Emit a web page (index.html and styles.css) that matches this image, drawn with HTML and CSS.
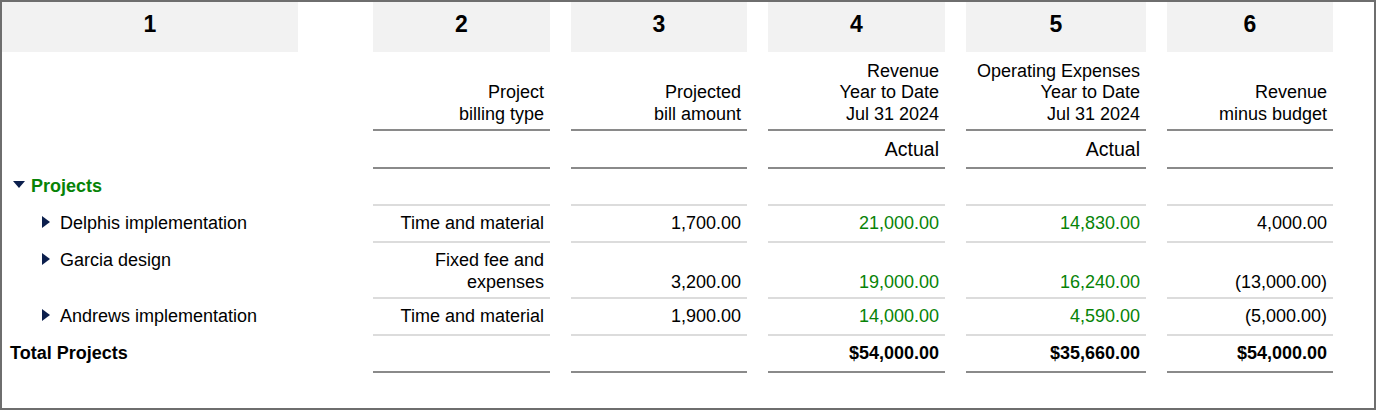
FILE: index.html
```html
<!DOCTYPE html>
<html lang="en">
<head>
<meta charset="utf-8">
<title>Projects report</title>
<link rel="stylesheet" href="styles.css">
</head>
<body>
<div class="frame">
  <div class="report">
    <!-- column numbers -->
    <div class="hnum first">1</div>
    <div class="hnum">2</div>
    <div class="hnum">3</div>
    <div class="hnum">4</div>
    <div class="hnum">5</div>
    <div class="hnum">6</div>

    <!-- column titles -->
    <div class="name"></div>
    <div class="htxt"><span>Project</span><span>billing type</span></div>
    <div class="htxt"><span>Projected</span><span>bill amount</span></div>
    <div class="htxt"><span>Revenue</span><span>Year to Date</span><span>Jul 31 2024</span></div>
    <div class="htxt"><span>Operating Expenses</span><span>Year to Date</span><span>Jul 31 2024</span></div>
    <div class="htxt"><span>Revenue</span><span>minus budget</span></div>

    <!-- scenario row -->
    <div class="name"></div>
    <div class="act"></div>
    <div class="act"></div>
    <div class="act">Actual</div>
    <div class="act">Actual</div>
    <div class="act"></div>

    <!-- group -->
    <div class="name group">
      <svg class="tri-down" width="12" height="7" viewBox="0 0 12 7"><path d="M0 0H12L6 7Z"/></svg>
      <span>Projects</span>
    </div>
    <div class="val light"></div>
    <div class="val light"></div>
    <div class="val light"></div>
    <div class="val light"></div>
    <div class="val light"></div>

    <!-- Delphis -->
    <div class="name child">
      <svg class="tri-right" width="8" height="12" viewBox="0 0 8 12"><path d="M0 0L8 6L0 12Z"/></svg>
      <span>Delphis implementation</span>
    </div>
    <div class="val light">Time and material</div>
    <div class="val light">1,700.00</div>
    <div class="val light green">21,000.00</div>
    <div class="val light green">14,830.00</div>
    <div class="val light">4,000.00</div>

    <!-- Garcia -->
    <div class="name child">
      <svg class="tri-right" width="8" height="12" viewBox="0 0 8 12"><path d="M0 0L8 6L0 12Z"/></svg>
      <span>Garcia design</span>
    </div>
    <div class="val light tall"><span>Fixed fee and</span><span>expenses</span></div>
    <div class="val light tall">3,200.00</div>
    <div class="val light tall green">19,000.00</div>
    <div class="val light tall green">16,240.00</div>
    <div class="val light tall">(13,000.00)</div>

    <!-- Andrews -->
    <div class="name child">
      <svg class="tri-right" width="8" height="12" viewBox="0 0 8 12"><path d="M0 0L8 6L0 12Z"/></svg>
      <span>Andrews implementation</span>
    </div>
    <div class="val light">Time and material</div>
    <div class="val light">1,900.00</div>
    <div class="val light green">14,000.00</div>
    <div class="val light green">4,590.00</div>
    <div class="val light">(5,000.00)</div>

    <!-- total -->
    <div class="name total">Total Projects</div>
    <div class="val dark bold"></div>
    <div class="val dark bold"></div>
    <div class="val dark bold">$54,000.00</div>
    <div class="val dark bold">$35,660.00</div>
    <div class="val dark bold">$54,000.00</div>
  </div>
</div>
</body>
</html>
```

FILE: styles.css
```css
html, body {
  margin: 0;
  padding: 0;
  background: #ffffff;
}

body {
  font-family: "Liberation Sans", Arial, sans-serif;
  color: #000;
}

.frame {
  box-sizing: border-box;
  width: 1376px;
  height: 410px;
  border: 2px solid #6e6e6e;
  overflow: hidden;
}

.report {
  display: grid;
  grid-template-columns: 350px 177px 176px 177px 180px 166px;
  grid-template-rows: 50px 79px 38px 37px 37px 56px 37px 37px;
  column-gap: 21px;
}

.hnum {
  background: #f2f2f2;
  font-weight: bold;
  font-size: 23px;
  line-height: 44px;
  padding-bottom: 6px;
  text-align: center;
}

.hnum.first {
  width: 296px;
}

.htxt {
  box-sizing: border-box;
  display: flex;
  flex-direction: column;
  justify-content: flex-end;
  align-items: flex-end;
  font-size: 18px;
  line-height: 21.5px;
  padding: 0 6px 4px 0;
  border-bottom: 2px solid #8a8a8a;
  white-space: nowrap;
}

.act {
  box-sizing: border-box;
  display: flex;
  justify-content: flex-end;
  align-items: flex-end;
  font-size: 19.5px;
  line-height: 22px;
  padding: 0 6px 7px 0;
  border-bottom: 2px solid #8a8a8a;
}

.name {
  display: flex;
  align-items: flex-start;
  font-size: 18px;
  line-height: 21.5px;
  padding: 7px 0 0 8px;
  white-space: nowrap;
}

.name.group {
  color: #078307;
  font-weight: bold;
}

.name.group .tri-down {
  margin: 4.5px 6px 0 3px;
  fill: #0c1f4d;
  flex: none;
}

.name.child {
  padding-left: 40px;
}

.name.child .tri-right {
  margin: 3px 10px 0 0;
  fill: #0c1f4d;
  flex: none;
}

.name.total {
  font-weight: bold;
}

.val {
  box-sizing: border-box;
  display: flex;
  flex-direction: column;
  justify-content: flex-end;
  align-items: flex-end;
  font-size: 18px;
  line-height: 21.5px;
  padding: 0 6px 7px 0;
  white-space: nowrap;
}

.val.tall {
  padding-bottom: 4px;
}

.val.light {
  border-bottom: 2px solid #dcdcdc;
}

.val.dark {
  border-bottom: 2px solid #8a8a8a;
}

.val.green {
  color: #078307;
}

.val.bold {
  font-weight: bold;
}
```
